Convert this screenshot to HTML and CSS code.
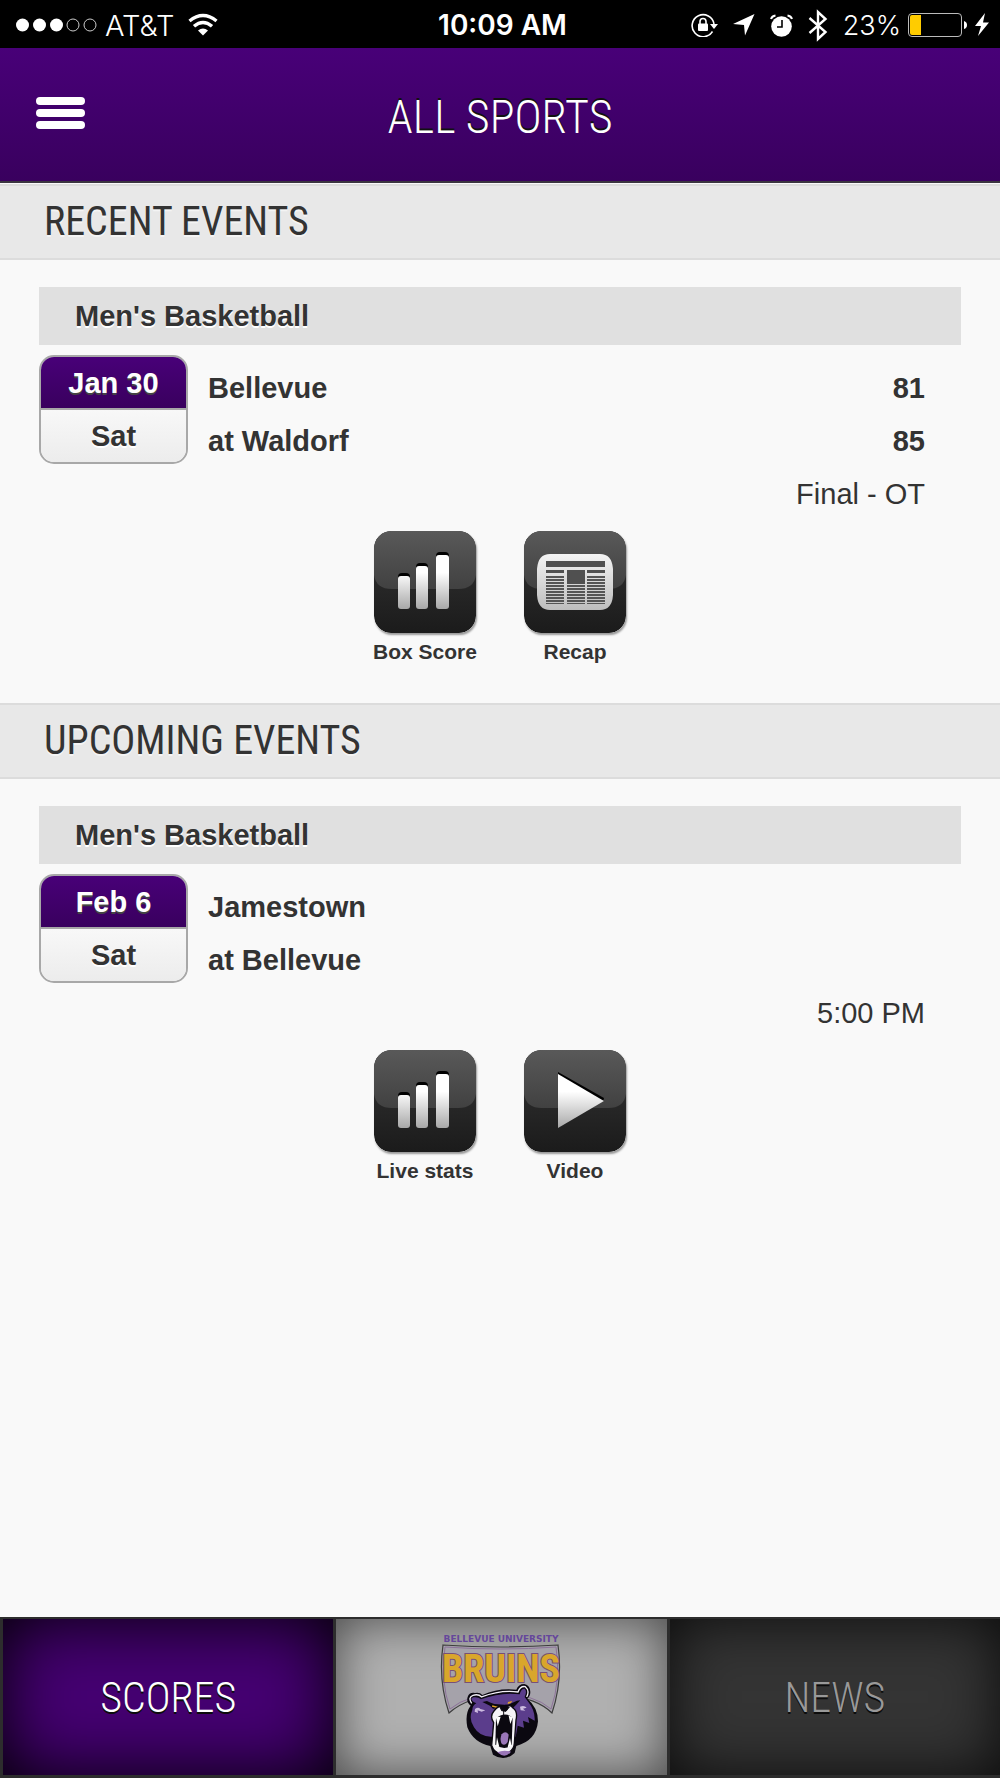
FILE: index.html
```html
<!DOCTYPE html>
<html lang="en">
<head>
<meta charset="utf-8">
<meta name="viewport" content="width=device-width, initial-scale=1">
<title>All Sports</title>
<link rel="stylesheet" href="styles.css">
</head>
<body>
<div class="status">
  <div class="status-left">
    <svg width="75" height="14" viewBox="0 0 75 14" aria-hidden="true">
      <g fill="#fff"><circle cx="6.500" cy="7" r="6.500"/><circle cx="23.500" cy="7" r="6.500"/><circle cx="40.500" cy="7" r="6.500"/></g>
      <g fill="none" stroke="#ccc"><circle cx="57" cy="7" r="6"/><circle cx="74" cy="7" r="6"/></g>
    </svg>
    <span class="carrier">AT&amp;T</span>
    <svg class="wifi" width="30" height="22" viewBox="0 0 30 22" aria-hidden="true">
      <path d="M15 21.500 10 16.500Q15 12.500 20 16.500Z" fill="#fff"/>
      <path d="M1.500 7Q15-4 28.500 7M6 12.300Q15 4.500 24 12.300" fill="none" stroke="#fff" stroke-width="3.400"/>
    </svg>
  </div>
  <span class="clock">10:09 AM</span>
  <div class="status-right">
    <svg width="27" height="24" viewBox="0 0 27 24" aria-hidden="true">
      <path d="M21.500 18.500A11 11 0 1 1 23 11" fill="none" stroke="#fff" stroke-width="1.600"/>
      <path d="M19 11h8l-4 5z" fill="#fff"/><rect x="7" y="10.500" width="10" height="7.500" rx="1" fill="#fff"/>
      <path d="M9 11V8.500a3 3 0 0 1 6 0V11" fill="none" stroke="#fff" stroke-width="1.600"/>
    </svg>
    <svg width="22" height="22" viewBox="0 0 22 22" aria-hidden="true"><path d="M21.500 0 12 21.500 11 11 0 10z" fill="#fff"/></svg>
    <svg width="23" height="23" viewBox="0 0 23 23" aria-hidden="true">
      <circle cx="11.500" cy="12.500" r="10.300" fill="#fff"/>
      <path d="M1 5Q2 2 5.500 1.500M22 5Q21 2 17.500 1.500" fill="none" stroke="#fff" stroke-width="2"/>
      <path d="M12 6v7H7" fill="none" stroke="#000" stroke-width="1.600"/>
    </svg>
    <svg width="20" height="33" viewBox="0 0 20 33" aria-hidden="true"><path d="M1.500 9 17.500 23 10 30V3L17.500 10 1.500 24" fill="none" stroke="#fff" stroke-width="2.400"/></svg>
    <div class="power">
      <span class="percent">23%</span>
      <svg width="60" height="24" viewBox="0 0 60 24" aria-hidden="true">
        <rect x=".5" y=".5" width="53" height="23" rx="3.500" fill="#000" stroke="#bbb"/>
        <path d="M13 2H4a2 2 0 0 0-2 2v16a2 2 0 0 0 2 2h9z" fill="#fc0"/>
        <path d="M56 8q3 1 3 4t-3 4z" fill="#fff"/>
      </svg>
      <svg width="14" height="24" viewBox="0 0 14 24" aria-hidden="true"><path d="M10 0 0 13h6L3 23 14 9.500H8z" fill="#fff"/></svg>
    </div>
  </div>
</div>

<header class="topbar">
  <button class="menu" type="button" aria-label="Menu"><span></span><span></span><span></span></button>
  <h1>ALL SPORTS</h1>
</header>

<main>
  <section>
    <h2>RECENT EVENTS</h2>
    <div class="event">
      <h3>Men's Basketball</h3>
      <div class="match">
        <div class="date"><span class="day">Jan 30</span><span class="weekday">Sat</span></div>
        <table class="teams">
          <tr><th scope="row">Bellevue</th><td>81</td></tr>
          <tr><th scope="row">at Waldorf</th><td>85</td></tr>
        </table>
      </div>
      <p class="result">Final - OT</p>
      <div class="actions">
        <a href="#box-score">
          <svg class="icon" viewBox="0 0 102 102" aria-hidden="true">
            <defs>
              <linearGradient id="tile" x2="0" y2="1"><stop stop-color="#353535"/><stop offset="1" stop-color="#1b1b1b"/></linearGradient>
              <linearGradient id="gloss" x2="0" y2="1"><stop stop-color="#595959"/><stop offset="1" stop-color="#414141"/></linearGradient>
              <linearGradient id="metal" gradientUnits="userSpaceOnUse" x1="0" y1="22" x2="0" y2="78"><stop offset=".35" stop-color="#fff"/><stop offset="1" stop-color="#a8a8a8"/></linearGradient>
              <linearGradient id="paper" x2="0" y2="1"><stop stop-color="#f4f4f4"/><stop offset="1" stop-color="#bdbdbd"/></linearGradient>
              <pattern id="lines" width="4" height="3" patternUnits="userSpaceOnUse"><path d="M0 1h4" stroke="#555" stroke-width="2"/></pattern>
              <symbol id="base" viewBox="0 0 102 102">
                <rect width="102" height="102" rx="17" fill="url(#tile)"/>
                <path d="M0 44V17A17 17 0 0 1 17 0H85A17 17 0 0 1 102 17V44Q100 58 84 58H18Q2 58 0 44Z" fill="url(#gloss)"/>
              </symbol>
              <symbol id="bars" viewBox="0 0 102 102">
                <g fill="#000"><rect x="24" y="42" width="12" height="20" rx="4"/><rect x="42" y="32" width="12" height="20" rx="4"/><rect x="62" y="21" width="13" height="20" rx="4"/></g>
                <g fill="url(#metal)"><rect x="24" y="45" width="12" height="33" rx="3"/><rect x="42" y="35" width="12" height="43" rx="3"/><rect x="62" y="24" width="13" height="54" rx="3"/></g>
              </symbol>
            </defs>
            <use href="#base"/><use href="#bars"/>
          </svg>
          <span>Box Score</span>
        </a>
        <a href="#recap">
          <svg class="icon" viewBox="0 0 102 102" aria-hidden="true">
            <use href="#base"/>
            <path d="M26 23H76Q88 23 89 38V64Q88 79 76 79H26Q14 79 13 64V38Q14 23 26 23Z" fill="url(#paper)"/>
            <g fill="#505050"><rect x="22" y="30" width="59" height="6"/><rect x="22" y="39" width="18" height="3"/><rect x="63" y="39" width="18" height="3"/><rect x="43" y="39" width="18" height="14"/></g>
            <g fill="url(#lines)"><rect x="22" y="44" width="18" height="29"/><rect x="43" y="54" width="18" height="19"/><rect x="63" y="44" width="18" height="29"/></g>
          </svg>
          <span>Recap</span>
        </a>
      </div>
    </div>
  </section>

  <section>
    <h2>UPCOMING EVENTS</h2>
    <div class="event">
      <h3>Men's Basketball</h3>
      <div class="match">
        <div class="date"><span class="day">Feb 6</span><span class="weekday">Sat</span></div>
        <table class="teams">
          <tr><th scope="row">Jamestown</th><td></td></tr>
          <tr><th scope="row">at Bellevue</th><td></td></tr>
        </table>
      </div>
      <p class="result">5:00 PM</p>
      <div class="actions">
        <a href="#live-stats">
          <svg class="icon" viewBox="0 0 102 102" aria-hidden="true"><use href="#base"/><use href="#bars"/></svg>
          <span>Live stats</span>
        </a>
        <a href="#video">
          <svg class="icon" viewBox="0 0 102 102" aria-hidden="true">
            <use href="#base"/>
            <path d="M34 22 80 48 79 52 34 26z" fill="#000"/><path d="M34 24 80 51 34 78z" fill="url(#metal)"/>
          </svg>
          <span>Video</span>
        </a>
      </div>
    </div>
  </section>
</main>

<nav class="tabs">
  <a class="tab active" href="#scores">SCORES</a>
  <a class="tab home" href="#home" aria-label="Bellevue University Bruins">
    <svg width="130" height="130" viewBox="0 0 130 130">
      <text class="wordmark-top" x="65" y="10" text-anchor="middle">BELLEVUE UNIVERSITY</text>
      <path d="M7 13Q65 17 122 13Q127 48 116 81Q98 64 65 64T13 81Q2 48 7 13Z" fill="#a5a2aa" stroke="#3d3d3d" stroke-width="1.200"/>
      <path d="M9 15Q65 19 120 15Q125 48 115 77Q98 62 65 62T14 77Q4 48 9 15Z" fill="none" stroke="#8d7399"/>
      <text class="wordmark" x="65" y="50" text-anchor="middle">BRUINS</text>
      <g transform="translate(-17 -12) scale(.3333)">
        <path d="M155 257Q141 246 146 231T168 219Q182 216 190 225Q238 203 292 209Q298 192 316 192Q334 197 334 216Q334 229 325 236Q357 262 357 304Q352 362 292 378L287 399Q256 427 222 404L214 378Q163 368 145 322Q137 280 155 257Z" fill="#0b0810"/>
        <path d="M158 250Q146 232 162 226Q178 221 188 231Q244 209 297 216Q304 197 319 200Q333 212 323 231" fill="none" stroke="#f2eef6" stroke-width="4"/>
        <path d="M164 246Q150 235 164 232Q178 230 186 238Q245 216 302 223Q306 205 317 206Q325 214 317 231L328 246Q349 272 347 302L327 291 331 309 312 302 315 323 296 317 290 350 218 350Q182 351 165 322Q148 297 160 270Q160 257 172 250Z" fill="#5b3d8c"/>
        <path d="M190 246 204 243Q212 247 226 252L266 255 284 247Q294 241 304 241L293 253 284 262 262 261 241 263 222 266 213 257Z" fill="#0b0810"/>
        <path d="M220 256 237 260 232 263 219 260ZM267 246 280 243 276 249 266 252Z" fill="#e0a126"/>
        <path d="M168 267Q178 259 184 267L199 271 188 275 176 271 177 279 167 275M303 260Q316 255 323 263L312 266 319 272 305 271" fill="#cdbce0"/>
        <path d="M225 273Q237 257 251 259Q275 250 283 265Q297 276 291 300L286 370Q285 396 253 404Q225 399 218 376L224 308Q211 289 225 273Z" fill="#f5f3f7" stroke="#0b0810" stroke-width="4"/>
        <path d="M243 261Q255 254 271 261L261 274 248 272ZM254 272V285" fill="#0b0810" stroke="#0b0810" stroke-width="3"/>
        <path d="M231 296Q256 273 281 293L278 374Q258 394 229 374Z" fill="#0b0810"/>
        <path d="M231 292 236 319 245 290ZM269 287 274 312 282 291ZM231 379 234 352 241 381ZM266 382 273 354 278 379Z" fill="#fff"/>
        <path d="M248 343Q260 330 269 344L266 366Q257 381 247 370Q242 355 248 343Z" fill="#9a76b8"/>
        <path d="M235 397Q253 388 276 395Q258 418 235 397Z" fill="#9a76b8"/>
      </g>
    </svg>
  </a>
  <a class="tab" href="#news">NEWS</a>
</nav>
</body>
</html>
```
FILE: styles.css
```css
* { box-sizing: border-box; }

body {
  margin: 0;
  min-height: 100vh;
  display: flex;
  flex-direction: column;
  background: #f9f9f9;
  color: #333;
  font-family: "Liberation Sans", Arial, sans-serif;
  font-size: 29px;
}

h1, h2, h3, p { margin: 0; font-weight: 400; }
a { color: inherit; text-decoration: none; }
svg { display: block; flex: none; }

.status {
  display: grid;
  grid-template-columns: 1fr auto 1fr;
  align-items: center;
  height: 48px;
  padding: 2px 11px 0 16px;
  background: #000;
  color: #fff;
  font-family: Inter, sans-serif;
}
.status-left, .status-right, .power { display: flex; align-items: center; }
.status-left svg { overflow: visible; }
.carrier { margin: 0 14px; font-size: 29px; font-weight: 300; }
.clock { font-size: 28px; font-weight: 600; }
.status-right { justify-content: flex-end; gap: 15px; }
.power { gap: 7px; }
.percent { font-size: 27px; font-weight: 300; }

.topbar {
  display: grid;
  grid-template-columns: 1fr auto 1fr;
  align-items: center;
  height: 135px;
  margin-bottom: 1px;
  padding: 4px 36px 0;
  background: linear-gradient(#480078, #39005e);
  border-bottom: 2px solid #3b3540;
}
.menu {
  display: grid;
  gap: 4px;
  width: 49px;
  padding: 0 0 8px;
  border: 0;
  background: none;
}
.menu span { height: 8px; border-radius: 4px; background: #fff; }
h1, h2, .tab { font-family: "Roboto Condensed", Roboto, sans-serif; }
h1, .tab { font-weight: 300; }
h1 { color: #fff; font-size: 46px; text-shadow: 0 -2px 0 #111; }

main { flex: 1; }
h2 {
  height: 76px;
  padding: 0 44px;
  border: solid #dcdcdc;
  border-width: 2px 0;
  background: #e8e8e8;
  font-size: 40px;
  line-height: 72px;
  text-shadow: 0 2px 0 #f4f4f4;
}

.event { padding: 27px 39px 38px; }
h3 {
  padding: 0 36px;
  background: #e0e0e0;
  font-size: 29px;
  font-weight: 700;
  line-height: 58px;
  text-shadow: 0 2px 0 #fff;
}
.match { display: flex; align-items: flex-start; gap: 20px; padding-top: 10px; }
.date {
  display: flex;
  flex-direction: column;
  width: 149px;
  overflow: hidden;
  border: 2px solid #a8a8a8;
  border-radius: 15px;
  font-weight: 700;
  line-height: 52px;
  text-align: center;
}
.day {
  height: 53px;
  border-bottom: 2px solid #a8a8a8;
  background: linear-gradient(#480078, #39005e);
  color: #fff;
  text-shadow: 0 2px 0 #444;
}
.weekday { background: linear-gradient(#f8f8f8, #ececec); text-shadow: 0 2px 0 #fff; }
.teams { flex: 1; margin-top: 7px; border-collapse: collapse; }
.teams th, .teams td { height: 53px; padding: 0; font-weight: 700; text-align: left; }
.teams td { padding-right: 36px; text-align: right; }
.result { padding-right: 36px; line-height: 53px; text-align: right; }

.actions { display: flex; justify-content: center; gap: 28px; padding-top: 10px; }
.actions a {
  display: flex;
  flex-direction: column;
  align-items: center;
  gap: 6px;
  width: 122px;
  font-size: 21px;
  font-weight: 700;
  line-height: 26px;
}
.icon { width: 102px; height: 102px; border-radius: 17px; box-shadow: 1px 2px 2px #999; }

.tabs {
  display: grid;
  grid-template-columns: repeat(3, 1fr);
  gap: 3px;
  height: 161px;
  padding: 2px 0 3px 3px;
  background: #2d2d2d;
}
.tab {
  display: flex;
  align-items: center;
  justify-content: center;
  background: #343434;
  box-shadow: inset 0 0 60px #000c;
  color: #999;
  font-size: 42px;
  text-shadow: 0 2px 0 #0c0c0c;
}
.tab.active { background: #450072; color: #fff; box-shadow: inset 0 0 70px #000; }
.tab.home { background: #b0b0b0; box-shadow: inset 0 0 50px #0009; text-shadow: none; }
.wordmark-top { fill: #65479b; font: 700 9px "DejaVu Sans", sans-serif; }
.wordmark {
  fill: #d9a62b;
  stroke: #775078;
  stroke-width: 2px;
  paint-order: stroke;
  font-size: 38px;
  font-weight: 700;
}
```
